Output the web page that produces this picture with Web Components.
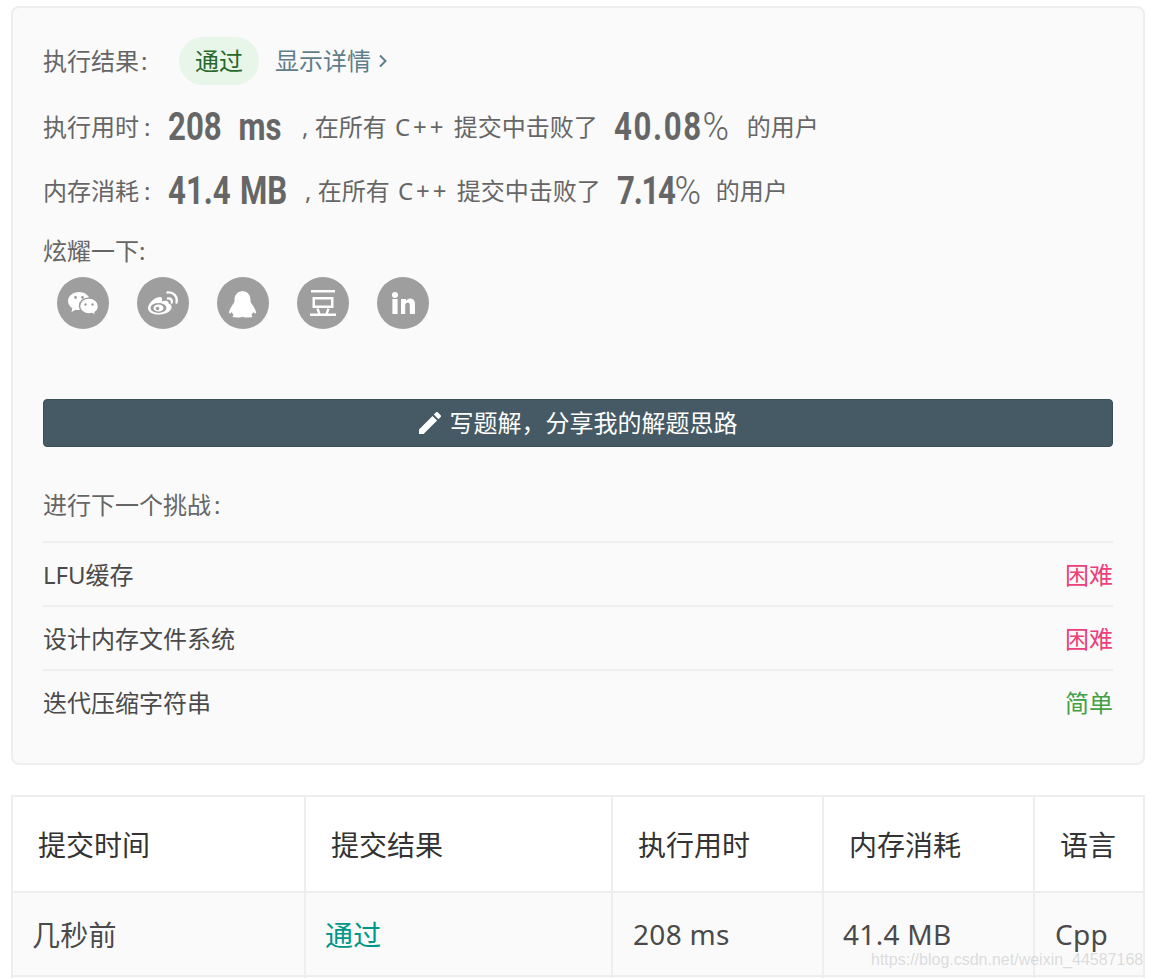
<!DOCTYPE html>
<html lang="zh-CN">
<head>
<meta charset="utf-8">
<title>提交结果</title>
<style>
  html, body { margin: 0; height: 979px; overflow: hidden; background: #fff; }
  body { font-family: "Noto Sans", "Noto Sans CJK SC", sans-serif; position: relative; }
</style>
</head>
<body>
<result-card>
  <status-line></status-line>
  <stat-line label="执行用时" value="208 ms" value-width="118" word-gap="11" percent="40.08" percent-width="116" percent-spacing="2"></stat-line>
  <stat-line label="内存消耗" value="41.4 MB" value-width="121" word-gap="2" percent="7.14" percent-width="82" percent-spacing="-1.5"></stat-line>
  <share-bar></share-bar>
  <write-button>写题解，分享我的解题思路</write-button>
  <next-list>
    <next-row level="hard" tag="困难">LFU缓存</next-row>
    <next-row level="hard" tag="困难">设计内存文件系统</next-row>
    <next-row level="easy" tag="简单">迭代压缩字符串</next-row>
  </next-list>
</result-card>
<submission-table></submission-table>
<water-mark>https://blog.csdn.net/weixin_44587168</water-mark>

<script>
class ResultCard extends HTMLElement {
  constructor() {
    super();
    this.attachShadow({ mode: "open" });
    this.shadowRoot.innerHTML = `
      <style>
        :host {
          display: block;
          margin: 6px 7px 0 11px;
          padding: 29px 30px 30px 30px;
          border: 2px solid #eeeeee;
          border-radius: 8px;
          background: #fafafa;
          color: #666666;
          font-size: 24px;
          line-height: 36px;
        }
      </style>
      <slot></slot>
    `;
  }
}

class StatusLine extends HTMLElement {
  constructor() {
    super();
    this.attachShadow({ mode: "open" });
    this.shadowRoot.innerHTML = `
      <style>
        :host { display: flex; align-items: center; height: 48px; margin-bottom: 10px; }
        .label { width: 136px; }
        .colon { margin-left: 2px; }
        .pill {
          width: 80px;
          height: 48px;
          line-height: 48px;
          text-align: center;
          border-radius: 24px;
          background: #e8f5e9;
          color: #27692b;
        }
        .details { margin-left: 16px; color: #607d8b; display: flex; align-items: center; }
        svg { margin-left: 7px; }
      </style>
      <span class="label">执行结果<span class="colon">:</span></span>
      <span class="pill">通过</span>
      <span class="details">显示详情
        <svg width="10" height="16" viewBox="0 0 10 16"><path d="M2 2.500 7.500 8 2 13.500" fill="none" stroke="#607d8b" stroke-width="2"/></svg>
      </span>
    `;
  }
}

class StatLine extends HTMLElement {
  constructor() {
    super();
    this.attachShadow({ mode: "open" });
    this.shadowRoot.innerHTML = `
      <style>
        :host { display: flex; align-items: center; height: 64px; white-space: nowrap; }
        .label { width: 125px; }
        .colon { margin-left: 5px; }
        .num { display: block; height: 44px; line-height: 44px; }
        .num b {
          display: inline-block;
          transform: scaleX(.82);
          transform-origin: 0 50%;
          font-family: "Roboto", sans-serif;
          font-size: 38px;
          font-weight: 700;
        }
        .num i {
          display: inline-block;
          transform: scaleX(1.15);
          transform-origin: 0 50%;
          font-style: normal;
          font-weight: 300;
          letter-spacing: 0;
        }
        .mid { margin-left: 16px; }
        .lang { letter-spacing: 3px; margin: 0 1px 0 2px; }
        .gap { margin-left: 16px; }
        .tail { margin-left: 17px; }
      </style>
      <span class="label">${this.getAttribute("label")}<span class="colon">:</span></span>
      <span class="num" style="width: ${this.getAttribute("value-width")}px"><b style="word-spacing: ${this.getAttribute("word-gap")}px">${this.getAttribute("value")}</b></span>
      <span class="mid">, 在所有 <span class="lang">C++</span> 提交中击败了</span>
      <span class="num gap" style="width: ${this.getAttribute("percent-width")}px"><b style="letter-spacing: ${this.getAttribute("percent-spacing")}px">${this.getAttribute("percent")}<i>%</i></b></span>
      <span class="tail">的用户</span>
    `;
  }
}

class ShareBar extends HTMLElement {
  constructor() {
    super();
    this.attachShadow({ mode: "open" });
    this.shadowRoot.innerHTML = `
      <style>
        :host { display: block; padding-top: 10px; }
        .label { display: block; height: 36px; }
        .icons { display: flex; gap: 28px; margin: 8px 0 0 14px; }
        svg { width: 52px; height: 52px; display: block; }
      </style>
      <span class="label">炫耀一下:</span>
      <div class="icons">
        <svg viewBox="0 0 52 52">
          <circle cx="26" cy="26" r="26" fill="#9e9e9e"/>
          <path d="M22 15c-6.100 0-11 4-11 9 0 3 1.700 5.500 4.300 7.200L14.500 35l4.200-2.200c1.100.2 2.200.2 3.300.2 6.100 0 11-4 11-9s-4.900-9-11-9z" fill="#fff"/>
          <path d="M32 21c-5.300 0-9.500 3.600-9.500 8s4.200 8 9.500 8c1.100 0 2.100-.2 3.100-.4l3.900 2.200-1-3.300c2.300-1.500 3.500-3.900 3.500-6.500 0-4.400-4.200-8-9.500-8z" fill="#fff" stroke="#9e9e9e" stroke-width="1.500"/>
          <circle cx="18.500" cy="20.500" r="1.400" fill="#9e9e9e"/><circle cx="25.500" cy="20.500" r="1.400" fill="#9e9e9e"/>
          <circle cx="28.500" cy="27.500" r="1.200" fill="#9e9e9e"/><circle cx="35.500" cy="27.500" r="1.200" fill="#9e9e9e"/>
        </svg>
        <svg viewBox="0 0 52 52">
          <circle cx="26" cy="26" r="26" fill="#9e9e9e"/>
          <path d="M23 37.500c-8 .5-12.500-3-12-7 .5-4 6-10 11.500-10.500 2.500 0 3 2 2.500 4.500 3.500-1.500 7-1 6.500 2 2 .5 3.500 2 3 4.500-1 3.500-5.500 6-11.500 6.500z" fill="#fff"/>
          <ellipse cx="21.500" cy="31" rx="8" ry="5" fill="#9e9e9e"/>
          <ellipse cx="21.500" cy="31" rx="5" ry="3.600" fill="#fff"/>
          <circle cx="20.500" cy="31.500" r="1.800" fill="#9e9e9e"/>
          <path d="M31 21.500c2.500-.5 4.500 1.500 3.800 4M30.500 15.500c5.700-1 10.400 4 9 10" fill="none" stroke="#fff" stroke-width="2.400" stroke-linecap="round"/>
        </svg>
        <svg viewBox="0 0 52 52">
          <circle cx="26" cy="26" r="26" fill="#9e9e9e"/>
          <path d="M26 14c-5.500 0-8.500 4-8.500 9 0 1.500-.2 2.500-1 3.500-2 3-4.500 6.500-4.500 9 0 1.500 1.300 1.300 2.800-.5.5 1.200 1.200 2.200 2 3-1 .5-1.500 1-1 1.800.5.7 2.500.7 5.500.7 2.300 0 3.500-.2 4.200-.7.7.5 1.900.7 4.200.7 3 0 5 0 5.500-.7.5-.8 0-1.300-1-1.800.8-.8 1.500-1.800 2-3 1.500 1.800 2.800 2 2.800.5 0-2.500-2.500-6-4.500-9-.8-1-1-2-1-3.500 0-5-3-9-8.500-9z" fill="#fff"/>
        </svg>
        <svg viewBox="0 0 52 52">
          <circle cx="26" cy="26" r="26" fill="#9e9e9e"/>
          <path fill-rule="evenodd" d="M14 13h24v2.500H14zM15.500 20h21v11h-21zm2.500 2.400v6.200h16v-6.200zM13 36.500h26V39H13zM19.300 32l2.400-.7 1.800 5.200h-2.500zM32.700 32l-2.400-.7-1.800 5.200H31z" fill="#fff"/>
        </svg>
        <svg viewBox="0 0 52 52">
          <circle cx="26" cy="26" r="26" fill="#9e9e9e"/>
          <circle cx="18" cy="18" r="3" fill="#fff"/>
          <rect x="15.400" y="22" width="5.200" height="15" fill="#fff"/>
          <path d="M24 22h5v2c1-1.500 2.500-2.400 4-2.400 3.500 0 5 2.200 5 5.900V37h-5.200v-8.800c0-1.700-.6-2.600-2-2.600-1.500 0-2.600 1.100-2.600 3V37H24z" fill="#fff"/>
        </svg>
      </div>
    `;
  }
}

class WriteButton extends HTMLElement {
  constructor() {
    super();
    this.attachShadow({ mode: "open" });
    this.shadowRoot.innerHTML = `
      <style>
        :host {
          display: flex;
          align-items: center;
          justify-content: center;
          gap: 9px;
          box-sizing: border-box;
          height: 48px;
          margin-top: 70px;
          background: #455a64;
          border: 1px solid #3b4f59;
          border-radius: 4px;
          color: #fff;
        }
        svg { width: 22px; height: 22px; }
      </style>
      <svg viewBox="3 3 18 18"><path d="M3 17.250V21h3.750L17.810 9.940l-3.750-3.750L3 17.250zM20.710 7.040a1 1 0 0 0 0-1.410l-2.340-2.340a1 1 0 0 0-1.410 0l-1.830 1.830 3.750 3.750 1.830-1.830z" fill="#fff"/></svg>
      <slot></slot>
    `;
  }
}

class NextList extends HTMLElement {
  constructor() {
    super();
    this.attachShadow({ mode: "open" });
    this.shadowRoot.innerHTML = `
      <style>
        :host { display: block; margin-top: 40px; }
        .label { display: block; height: 36px; margin-bottom: 18px; }
        .colon { margin-left: 3px; }
      </style>
      <span class="label">进行下一个挑战<span class="colon">:</span></span>
      <slot></slot>
    `;
  }
}

class NextRow extends HTMLElement {
  constructor() {
    super();
    this.attachShadow({ mode: "open" });
    const color = this.getAttribute("level") === "easy" ? "#43a047" : "#ec407a";
    this.shadowRoot.innerHTML = `
      <style>
        :host {
          display: flex;
          justify-content: space-between;
          align-items: center;
          box-sizing: border-box;
          height: 64px;
          padding-top: 2px;
          border-top: 2px solid #eeeeee;
          color: #4a4a4a;
        }
        .tag { color: ${color}; }
      </style>
      <span><slot></slot></span>
      <span class="tag">${this.getAttribute("tag")}</span>
    `;
  }
}

class SubmissionTable extends HTMLElement {
  constructor() {
    super();
    this.attachShadow({ mode: "open" });
    this.shadowRoot.innerHTML = `
      <style>
        :host { display: block; margin: 30px 0 0 11px; font-size: 28px; color: #4a4a4a; }
        table { border-collapse: collapse; table-layout: fixed; width: 1134px; }
        th, td { border: 2px solid #eeeeee; padding: 0; text-align: left; white-space: nowrap; }
        th { height: 94px; padding-left: 25px; font-weight: 400; color: #333; }
        td { height: 82px; padding-left: 19px; letter-spacing: .3px; }
        td.n { padding-left: 20px; }
        tbody tr:first-child { background: #fafafa; }
        tbody tr:last-child td { height: 1px; border-bottom: 0; }
        .ok { color: #009688; }
      </style>
      <table>
        <colgroup>
          <col style="width: 293px"><col style="width: 307px"><col style="width: 211px"><col style="width: 211px"><col>
        </colgroup>
        <thead>
          <tr><th>提交时间</th><th>提交结果</th><th>执行用时</th><th>内存消耗</th><th>语言</th></tr>
        </thead>
        <tbody>
          <tr><td>几秒前</td><td class="ok">通过</td><td class="n">208 ms</td><td>41.4 MB</td><td class="n">Cpp</td></tr>
          <tr><td></td><td></td><td></td><td></td><td></td></tr>
        </tbody>
      </table>
    `;
  }
}

class WaterMark extends HTMLElement {
  constructor() {
    super();
    this.attachShadow({ mode: "open" });
    this.shadowRoot.innerHTML = `
      <style>
        :host {
          position: absolute;
          left: 871px;
          top: 949px;
          font: 16px/22px "Liberation Sans", sans-serif;
          color: rgba(170, 170, 170, .4);
          white-space: nowrap;
        }
      </style>
      <slot></slot>
    `;
  }
}

customElements.define("result-card", ResultCard);
customElements.define("status-line", StatusLine);
customElements.define("stat-line", StatLine);
customElements.define("share-bar", ShareBar);
customElements.define("write-button", WriteButton);
customElements.define("next-list", NextList);
customElements.define("next-row", NextRow);
customElements.define("submission-table", SubmissionTable);
customElements.define("water-mark", WaterMark);
</script>
</body>
</html>
